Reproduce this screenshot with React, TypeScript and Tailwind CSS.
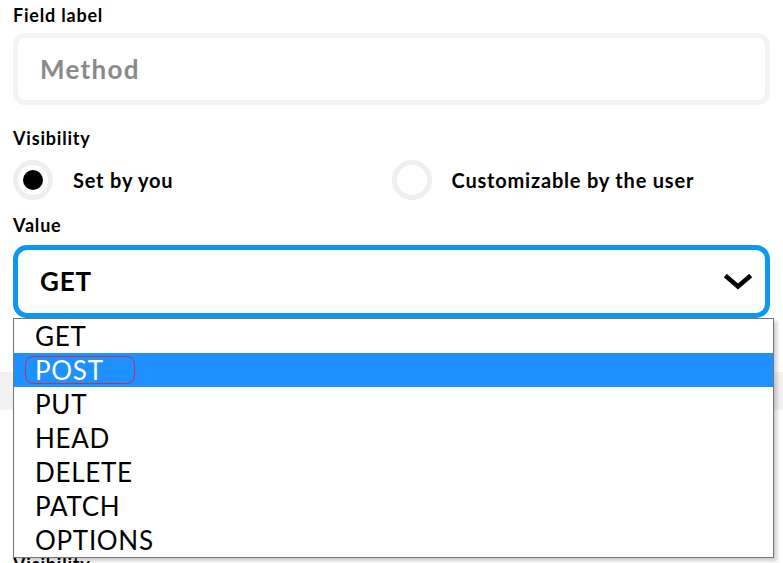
import React from "react";

const options = ["GET", "POST", "PUT", "HEAD", "DELETE", "PATCH", "OPTIONS"];

const Radio = ({ checked, label }: { checked: boolean; label: string }) => (
  <div className="flex items-center gap-5">
    <div className="w-10 h-10 rounded-full border-[5px] border-[#eeeeee] flex items-center justify-center">
      {checked && <div className="w-5 h-5 rounded-full bg-black" />}
    </div>
    <span className="text-[20px] font-bold tracking-[0.8px] text-black">{label}</span>
  </div>
);

const App = () => {
  return (
    <div className="relative w-[783px] h-[563px] overflow-hidden bg-white font-['Lato',sans-serif] text-black">
      <div className="flex flex-col px-[13px] pt-[4px]">
        <p className="text-[18px] font-bold tracking-[0.8px] leading-[22px]">Field label</p>
        <div className="mt-[7px] h-[72px] rounded-[12px] border-[5px] border-[#f3f3f3] flex items-center px-[22px]">
          <span className="text-[26px] font-bold tracking-[1.3px] text-[#8a8a8a]">Method</span>
        </div>
        <p className="mt-[22px] text-[18px] font-bold tracking-[0.8px] leading-[22px]">Visibility</p>
        <div className="mt-[11px] grid grid-cols-2">
          <Radio checked label="Set by you" />
          <Radio checked={false} label="Customizable by the user" />
        </div>
        <p className="mt-[14px] text-[18px] font-bold tracking-[0.8px] leading-[22px]">Value</p>
        <div className="mt-[9px] h-[73px] rounded-[14px] border-[5px] border-[#0a99ee] flex items-center justify-between pl-[22px] pr-[13px]">
          <span className="text-[26px] font-bold tracking-[0.8px]">GET</span>
          <svg width="28" height="16" viewBox="0 0 28 16">
            <path d="M3 3 L14 12.5 L25 3" fill="none" stroke="black" strokeWidth="4.5" strokeLinecap="square" />
          </svg>
        </div>
        <div className="mt-[54px] -mx-[13px] h-[38px] bg-[#f2f2f2]" />
        <p className="mt-[143px] text-[18px] font-bold tracking-[0.8px] leading-[22px]">Visibility</p>
      </div>

      {/* native select popup */}
      <div className="absolute left-[13px] top-[318px] w-[761px] border border-[#767676] bg-white shadow-[3px_3px_4px_rgba(0,0,0,0.2)]">
        {options.map((o) => (
          <div
            key={o}
            className={`h-[34px] flex items-center pl-[21px] text-[26px] tracking-[0.7px] ${o === "POST" ? "bg-[#1e90ff] text-white" : "text-black"}`}
          >
            {o === "POST" ? (
              <span className="-ml-[10px] w-[110px] pl-[9px] rounded-[8px] border-[1.5px] border-[#c2304a] leading-[26px]">{o}</span>
            ) : (
              o
            )}
          </div>
        ))}
      </div>
    </div>
  );
};

export default App;
